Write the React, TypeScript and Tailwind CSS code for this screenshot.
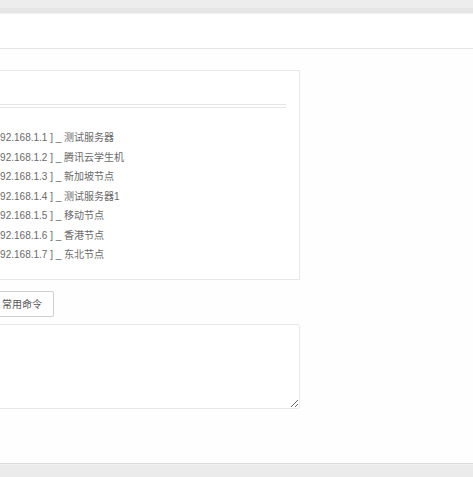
import React from 'react';

const servers = [
  { ip: '192.168.1.1', name: '测试服务器' },
  { ip: '192.168.1.2', name: '腾讯云学生机' },
  { ip: '192.168.1.3', name: '新加坡节点' },
  { ip: '192.168.1.4', name: '测试服务器1' },
  { ip: '192.168.1.5', name: '移动节点' },
  { ip: '192.168.1.6', name: '香港节点' },
  { ip: '192.168.1.7', name: '东北节点' },
];

const font = { fontFamily: '"Liberation Sans", "Noto Sans CJK SC", sans-serif' };

export default function App() {
  return (
    <div className="w-[473px] h-[477px] overflow-hidden bg-white flex flex-col" style={font}>
      {/* top bar */}
      <div className="h-[8px] bg-[#ededed]" />
      <div className="h-[6px] bg-[#e6e6e6] border-b border-[#efefef]" />

      {/* toolbar row */}
      <div className="h-[35px] bg-white border-b border-[#e4e4e4]" />

      {/* content */}
      <div className="flex-1 bg-[#fefefe] pt-[21px] border-b border-[#dcdcdc]">
        <div className="w-[300px] border-t border-b border-r border-[#e8e8e8] bg-white">
          <div className="h-[33px]" />
          <div className="w-[286px] h-[4px] border-t border-b border-[#e6e6e6]" />
          <ul className="pt-[20px] pb-[14px] -ml-[11px] text-[10px] leading-[19.5px] text-[#6a6a6a]">
            {servers.map((s) => (
              <li key={s.ip} className="whitespace-nowrap">
                [ {s.ip} ] _ {s.name}
              </li>
            ))}
          </ul>
        </div>

        <div className="mt-[11px]">
          <button
            type="button"
            className="-ml-[12px] h-[26px] pl-[13px] pr-[11px] border border-[#cfcfcf] bg-white text-[10px] text-[#555] rounded-[2px]"
          >
            常用命令
          </button>
        </div>

        <div className="mt-[7px] w-[310px] -ml-[10px]">
          <textarea
            className="block w-full h-[85px] border border-[#e8e8e8] bg-white rounded-[3px] outline-none resize"
            readOnly
          />
        </div>
      </div>
      <div className="h-[13px] bg-[#ebebeb] border-t border-[#f2f2f2]" />
    </div>
  );
}
